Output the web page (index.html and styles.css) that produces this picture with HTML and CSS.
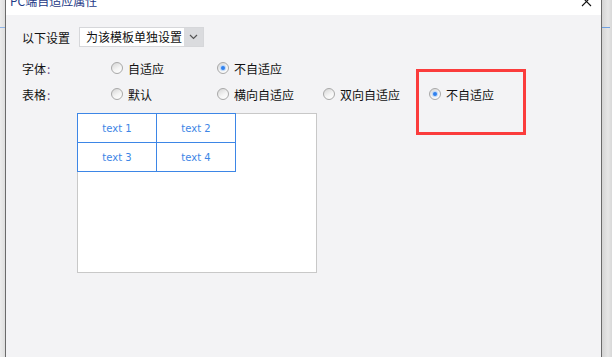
FILE: index.html
```html
<!DOCTYPE html>
<html lang="zh">
<head>
<meta charset="utf-8">
<link rel="stylesheet" href="styles.css">
</head>
<body>
<div class="page">
  <div class="strip strip-left"><div class="tick"></div></div>
  <div class="dialog">
    <div class="titlebar">
      <span class="title">PC端自适应属性</span>
      <svg class="close" width="11" height="11" viewBox="0 0 11 11"><path d="M1 1 L10 10 M10 1 L1 10" stroke="#111" stroke-width="1.1" fill="none"/></svg>
    </div>
    <div class="content">
      <div class="row">
        <span class="setlabel">以下设置</span>
        <div class="select">
          <span class="select-text">为该模板单独设置</span>
          <span class="select-btn"><svg width="9" height="6" viewBox="0 0 9 6"><path d="M1 1 L4.5 4.5 L8 1" stroke="#555" stroke-width="1.2" fill="none"/></svg></span>
        </div>
      </div>
      <div class="row row-font">
        <span class="label">字体<span class="colon">:</span></span>
        <label class="opt"><span class="radio"></span>自适应</label>
        <label class="opt"><span class="radio checked"></span>不自适应</label>
      </div>
      <div class="row row-table">
        <span class="label">表格<span class="colon">:</span></span>
        <label class="opt"><span class="radio"></span>默认</label>
        <label class="opt"><span class="radio"></span>横向自适应</label>
        <label class="opt"><span class="radio"></span>双向自适应</label>
        <label class="opt"><span class="radio checked"></span>不自适应</label>
      </div>
      <div class="preview">
        <div class="grid">
          <div class="cell">text 1</div>
          <div class="cell">text 2</div>
          <div class="cell">text 3</div>
          <div class="cell">text 4</div>
        </div>
      </div>
    </div>
  </div>
  <div class="strip strip-right"><div class="tick"></div></div>
  <div class="highlight"></div>
</div>
</body>
</html>
```

FILE: styles.css
```css
html, body {
  margin: 0;
  padding: 0;
}
body {
  width: 612px;
  height: 357px;
  overflow: hidden;
  font-family: "Noto Sans CJK SC", "Noto Sans", sans-serif;
  font-size: 12px;
  color: #111;
  background: #e4e4e4;
}
.page {
  position: relative;
  display: flex;
  height: 357px;
}
.strip {
  padding-top: 27px;
  box-sizing: border-box;
}
.strip-left {
  width: 5px;
  background: linear-gradient(90deg, #ececec, #dedede);
}
.strip-left .tick {
  width: 5px;
  height: 1px;
  background: #8fb4e6;
}
.strip-right {
  flex: 1;
  background: linear-gradient(90deg, #d4d4d4, #e6e6e6 60%, #d8d8d8);
}
.strip-right .tick {
  width: 8px;
  height: 1px;
  background: #6ea0e0;
}
.dialog {
  width: 595px;
  border-left: 1px solid #6a6a6a;
  border-right: 1px solid #6a6a6a;
  background: #f3f3f5;
  display: flex;
  flex-direction: column;
}
.titlebar {
  height: 15px;
  background: #fff;
  display: flex;
  justify-content: space-between;
  align-items: flex-start;
  overflow: hidden;
}
.title {
  margin-left: 4px;
  margin-top: -5px;
  line-height: 12px;
  color: #1e3a86;
  font-size: 12px;
}
.close {
  margin-right: 9px;
  margin-top: -4px;
}
.content {
  padding: 12px 0 0 16px;
}
.row {
  display: flex;
  align-items: center;
  height: 20px;
}
.setlabel {
  width: 57px;
}
.select {
  display: flex;
  width: 125px;
  height: 20px;
  box-sizing: border-box;
  border: 1px solid #d6d7da;
  background: #fff;
}
.select-text {
  flex: 1;
  padding-left: 6px;
  line-height: 18px;
}
.select-btn {
  width: 19px;
  background: #dadbde;
  display: flex;
  align-items: center;
  justify-content: center;
}
.row-font {
  margin-top: 11px;
}
.row-table {
  margin-top: 6px;
}
.label {
  width: 89px;
}
.colon {
  color: #6b4a8a;
  margin-left: 1px;
}
.opt {
  width: 106px;
  display: flex;
  align-items: center;
  gap: 5px;
}
.radio {
  width: 12px;
  height: 12px;
  box-sizing: border-box;
  border-radius: 50%;
  border: 1px solid #a8a8a8;
  background: linear-gradient(150deg, #d4d4d4, #f4f4f4 55%, #ffffff);
  display: flex;
  align-items: center;
  justify-content: center;
}
.radio.checked::after {
  content: "";
  width: 4px;
  height: 4px;
  border-radius: 50%;
  background: #2f80ee;
  box-shadow: 0 0 1px 1px #b9d4f7;
}
.preview {
  margin: 9px 0 0 55px;
  width: 240px;
  height: 160px;
  box-sizing: border-box;
  border: 1px solid #c8c8c8;
  background: #fff;
}
.grid {
  margin: -1px 0 0 -1px;
  width: 159px;
  display: grid;
  grid-template-columns: 78px 78px;
  grid-auto-rows: 28px;
  gap: 1px;
  padding: 1px;
  box-sizing: border-box;
  background: #3d86e6;
}
.cell {
  background: #fff;
  color: #3d86e6;
  font-family: "DejaVu Sans", sans-serif;
  font-size: 10px;
  display: flex;
  align-items: center;
  justify-content: center;
}
.highlight {
  position: absolute;
  left: 416px;
  top: 69px;
  width: 110px;
  height: 66px;
  box-sizing: border-box;
  border: 3px solid #fb3c3c;
}
```
